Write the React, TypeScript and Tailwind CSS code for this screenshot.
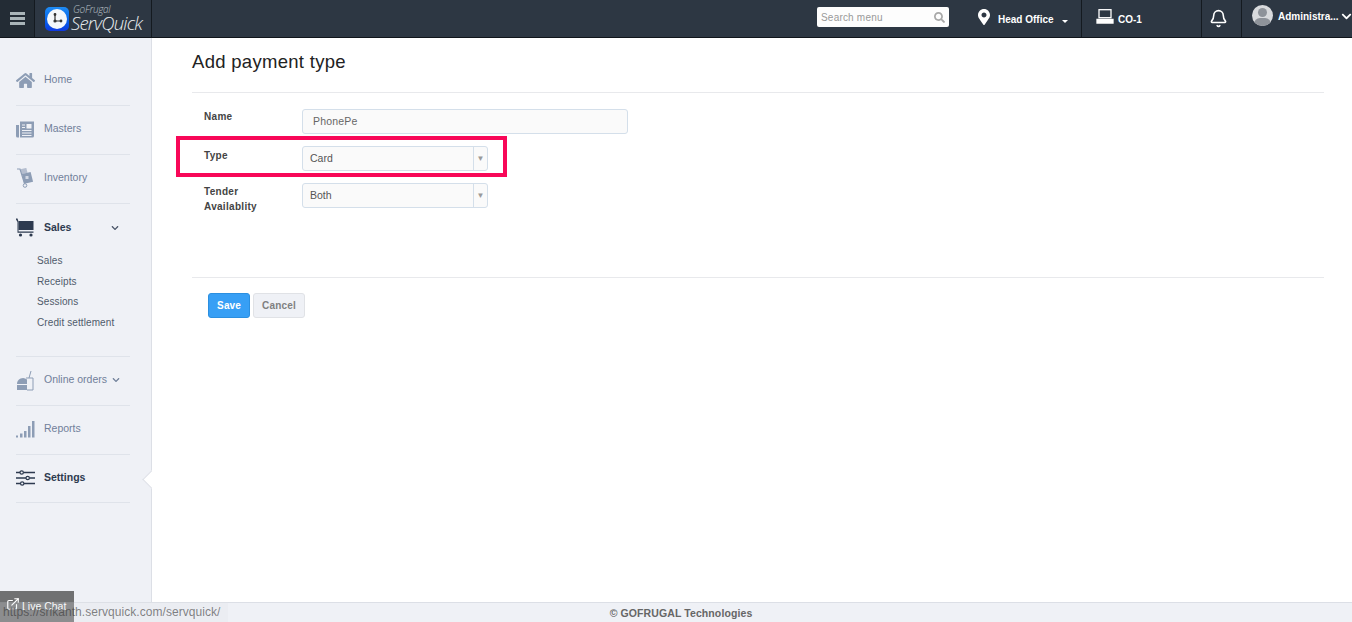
import type { ReactNode } from 'react'
import { Bell } from 'lucide-react'
import { FaChevronDown, FaHome, FaMapMarkerAlt, FaSearch } from 'react-icons/fa'
import { FiExternalLink } from 'react-icons/fi'

const muted = '#8d9db5'

const NewsIcon = () => (
	<svg width="18" height="17" viewBox="0 0 18 17" fill={muted}>
		<path d="M0 4h3v12.500H1.500A1.500 1.500 0 0 1 0 15z" />
		<path d="M4 0.500h14V15a1.500 1.500 0 0 1-1.500 1.500H4z" />
		<rect x="10.500" y="3" width="5" height="4.500" fill="#eff1f6" />
		<path d="M6 4h3M6 6.500h3M6 9.500h9.500M6 12h9.500M6 14.500h9.500" stroke="#eff1f6" />
	</svg>
)

const DollyIcon = () => (
	<svg width="18" height="20" viewBox="0 0 18 20" fill={muted}>
		<path d="M1 1h3l4.500 14.500" fill="none" stroke={muted} strokeWidth="1.200" />
		<rect x="7" y="5" width="9" height="10" transform="rotate(-14 11 10)" />
		<rect x="5" y="0.500" width="6" height="5" transform="rotate(-14 8 3)" opacity=".6" />
		<circle cx="9" cy="17.500" r="1.800" fill="none" stroke={muted} />
		<rect x="9.500" y="8" width="3" height="3" fill="#eff1f6" opacity=".7" />
	</svg>
)

const CartIcon = () => (
	<svg width="19" height="19" viewBox="0 0 19 19" fill="#2d3a4f">
		<path d="M0 0.500h1.500l1 3v10h15v1.200H1.500V4L0 1.500z" />
		<rect x="2.500" y="3" width="15" height="9" />
		<circle cx="4.500" cy="17" r="1.600" />
		<circle cx="15" cy="17" r="1.600" />
	</svg>
)

const OrdersIcon = () => (
	<svg width="19" height="21" viewBox="0 0 19 21" fill={muted}>
		<path d="M1 14a6 6 0 0 1 10-4.500V14z" />
		<rect x="1" y="15" width="10" height="5" />
		<path d="M10 8h7v12h-6" fill="none" stroke={muted} />
		<path d="M13 8l2-7" fill="none" stroke={muted} />
	</svg>
)

const ReportsIcon = () => (
	<svg width="19" height="17" viewBox="0 0 19 17" fill={muted}>
		<rect x="0" y="14.500" width="2" height="2" />
		<rect x="4" y="12.500" width="2.500" height="4" />
		<rect x="8" y="10" width="2.500" height="6.500" />
		<rect x="12" y="5" width="2.500" height="11.500" />
		<rect x="16" y="0" width="2.500" height="16.500" />
	</svg>
)

const SettingsIcon = () => (
	<svg width="19" height="16" viewBox="0 0 19 16" fill="none" stroke="#2d3a4f" strokeWidth="1.600">
		<path d="M0 2.500h4M7.500 2.500H19M0 8h10M13.500 8H19M0 13.500h4.500M8 13.500h11" />
		<circle cx="5.700" cy="2.500" r="1.700" strokeWidth="1.200" />
		<circle cx="11.700" cy="8" r="1.700" strokeWidth="1.200" />
		<circle cx="6.200" cy="13.500" r="1.700" strokeWidth="1.200" />
	</svg>
)

const ComputerIcon = () => (
	<svg width="18" height="15" viewBox="0 0 18 15" fill="none" stroke="#fff" strokeWidth="1.300">
		<rect x="3" y="0.700" width="12" height="8" />
		<path d="M1 10.500h16v3.500H1z" fill="#fff" />
	</svg>
)

const NavItem = ({ icon, label, active, children, chevron, last }: { icon: ReactNode; label: string; active?: boolean; children?: ReactNode; chevron?: boolean; last?: boolean }) => (
	<div className={`relative flex items-center border-b border-[#dfe3ea] pb-[2px] ${last ? 'h-[48px]' : 'h-[49px]'}`}>
		<div className="flex w-[28px] items-center justify-start">{icon}</div>
		<span className={active ? 'text-[10.5px] font-bold text-[#2d3a4f]' : 'text-[10.5px] text-[#71809a]'}>{label}</span>
		{chevron ? <FaChevronDown className="ml-[5px] text-[8px] text-[#71809a]" /> : null}
		{children}
	</div>
)

const Select = ({ value }: { value: string }) => (
	<div className="flex h-[25px] w-[186px] items-center rounded-[3px] border border-[#d4dfea] bg-[#fafafa]">
		<span className="flex-1 pl-[7px] text-[10.5px] text-[#555]">{value}</span>
		<span className="flex h-full w-[14px] items-center justify-center border-l border-[#d4dfea] text-[8px] text-[#999]">▼</span>
	</div>
)

const App = () => {
	return (
		<div className="flex h-[622px] w-full flex-col overflow-hidden bg-white font-['Liberation_Sans',sans-serif]">
			<header className="flex h-[38px] shrink-0 border-b border-[#10151b] bg-[#2d3743] text-white">
				<div className="flex w-[35px] items-center justify-center border-r border-[#141a20] bg-[#232c35]">
					<div className="flex w-[15px] flex-col gap-[2px]">
						<span className="h-[3px] bg-[#a9b4b8]" />
						<span className="h-[3px] bg-[#a9b4b8]" />
						<span className="h-[3px] bg-[#a9b4b8]" />
					</div>
				</div>
				<div className="flex w-[117px] items-center border-r border-[#141a20] pl-[10px]">
					<div className="flex h-[24px] w-[24px] shrink-0 items-center justify-center rounded-[5px] bg-linear-to-b from-[#1f8cf5] to-[#1038e0]">
						<div className="flex h-[20px] w-[20px] items-center justify-center rounded-full bg-[#f4f7fb]">
							<svg width="12" height="12" viewBox="0 0 12 12" fill="#333" stroke="#333" strokeWidth="1.200">
								<path d="M4 1v7h6" fill="none" />
								<circle cx="4" cy="1.500" r="0.800" />
								<circle cx="4" cy="8" r="1" />
								<circle cx="10" cy="8" r="0.800" />
							</svg>
						</div>
					</div>
					<div className="ml-[2px] flex flex-col font-['Open_Sans',sans-serif] italic leading-none text-[#e8ecef]">
						<span className="pl-[2px] text-[10px] font-light leading-[9px] tracking-[-0.3px] text-[#b8c0c6]">GoFrugal</span>
						<span className="whitespace-nowrap text-[18.500px] font-light leading-[18px] tracking-[-0.8px]">ServQuick</span>
					</div>
				</div>
				<div className="ml-auto flex items-start pr-[29px] pt-[7px]">
					<div className="flex h-[20px] w-[132px] items-center justify-between rounded-[2px] bg-[#fdfdfd] px-[4px]">
						<span className="text-[10px] tracking-[0.2px] text-[#999]">Search menu</span>
						<FaSearch className="text-[11px] text-[#a8a8a8]" />
					</div>
				</div>
				<div className="flex w-[104px] items-center border-r border-[#141a20]">
					<FaMapMarkerAlt className="ml-[-2px] mt-[-4px] text-[16px]" />
					<span className="ml-[6px] mt-[2px] text-[10px] font-bold">Head Office</span>
					<span className="ml-[8px] mt-[5px] h-0 w-0 border-x-[3px] border-t-[3px] border-x-transparent border-t-white" />
				</div>
				<div className="flex w-[120px] items-center border-r border-[#141a20] pl-[14px]">
					<div className="mt-[-4px]">
						<ComputerIcon />
					</div>
					<span className="ml-[4px] mt-[2px] text-[10px] font-bold">CO-1</span>
				</div>
				<div className="flex w-[40px] items-center border-r border-[#141a20] pl-[7px]">
					<Bell size={19} strokeWidth={2} />
				</div>
				<div className="flex w-[110px] items-center pl-[10px]">
					<div className="relative mt-[-6px] h-[21px] w-[21px] shrink-0 overflow-hidden rounded-full bg-[#d8dadd]">
						<span className="absolute left-[6px] top-[3px] h-[9px] w-[9px] rounded-full bg-[#8e939a]" />
						<span className="absolute left-[2px] top-[13px] h-[12px] w-[17px] rounded-full bg-[#8e939a]" />
					</div>
					<span className="ml-[5px] mt-[-4px] whitespace-nowrap text-[10px] font-bold">Administra...</span>
					<FaChevronDown className="ml-[2px] mt-[-5px] text-[11px]" />
				</div>
			</header>

			<div className="flex min-h-0 flex-1">
				<aside className="relative w-[152px] shrink-0 border-r border-[#dcdfe6] bg-[#eff1f6] pl-[16px] pr-[21px] pt-[19px]">
					<NavItem icon={<FaHome size={19} color={muted} />} label="Home" />
					<NavItem icon={<NewsIcon />} label="Masters" />
					<NavItem icon={<DollyIcon />} label="Inventory" />
					<div className="h-[153px] border-b border-[#dfe3ea]">
						<div className="flex h-[47px] items-center">
							<div className="w-[28px]">
								<CartIcon />
							</div>
							<span className="text-[10.5px] font-bold text-[#2d3a4f]">Sales</span>
							<FaChevronDown className="ml-[40px] text-[8px] text-[#4a5568]" />
						</div>
						<div className="flex flex-col pl-[21px] text-[10px] leading-[20.500px] tracking-[0.1px] text-[#4f5b6b]">
							<span>Sales</span>
							<span>Receipts</span>
							<span>Sessions</span>
							<span>Credit settlement</span>
						</div>
					</div>
					<NavItem icon={<OrdersIcon />} label="Online orders" chevron />
					<NavItem icon={<ReportsIcon />} label="Reports" />
					<NavItem icon={<SettingsIcon />} label="Settings" active last>
						<span className="absolute right-[-28px] top-[18px] h-[13px] w-[13px] rotate-45 border-b border-l border-[#dcdfe6] bg-white" />
					</NavItem>
				</aside>

				<main className="min-w-0 flex-1 pl-[40px] pr-[28px]">
					<div className="flex h-[55px] items-center border-b border-[#e8e9ec] pb-[7px]">
						<h1 className="text-[18.500px] font-normal tracking-[0.3px] text-[#222]">Add payment type</h1>
					</div>
					<div className="relative pl-[12px] pt-[16px]">
						<div className="flex h-[37px]">
							<label className="w-[98px] pt-[1px] text-[10px] font-bold leading-[13px] tracking-[0.3px] text-[#444]">Name</label>
							<div className="flex h-[25px] w-[326px] items-center rounded-[3px] border border-[#d4dfea] bg-[#fafafa] pl-[10px] text-[10.5px] tracking-[0.2px] text-[#666]">PhonePe</div>
						</div>
						<div className="flex h-[37px]">
							<label className="w-[98px] pt-[3px] text-[10px] font-bold leading-[13px] tracking-[0.3px] text-[#444]">Type</label>
							<Select value="Card" />
						</div>
						<div className="flex h-[94px]">
							<label className="w-[98px] pt-[1px] text-[10px] font-bold leading-[15px] tracking-[0.3px] text-[#444]">Tender<br />Availablity</label>
							<Select value="Both" />
						</div>
						<div className="absolute left-[-16px] top-[43px] h-[41px] w-[331px] border-4 border-[#f80758]" />
					</div>
					<div className="flex gap-[3px] border-t border-[#e8e9ec] pl-[16px] pt-[15px]">
						<button className="h-[25px] w-[42px] rounded-[3px] border border-[#2b8fe0] bg-[#379ff5] pb-[1px] text-[10px] font-bold tracking-[0.1px] text-white">Save</button>
						<button className="h-[25px] w-[52px] rounded-[3px] border border-[#e0e2e6] bg-[#eff1f6] pb-[1px] text-[10px] font-bold tracking-[0.2px] text-[#808080]">Cancel</button>
					</div>
				</main>
			</div>

			<footer className="flex h-[20px] shrink-0 items-center justify-center border-t border-[#dcdfe6] bg-[#eff1f6] pl-[10px] pt-[2px] text-[10.5px] font-bold tracking-[0.1px] text-[#666]">
				© GOFRUGAL Technologies
			</footer>

			<div className="absolute bottom-0 left-0 flex h-[31px] w-[74px] items-start bg-[#3a3a3a]/70 pl-[6px] pt-[6px] text-[10.5px] text-white">
				<FiExternalLink className="mr-[2px] text-[14px]" />
				<span className="mt-[2px]">Live Chat</span>
			</div>
			<div className="absolute bottom-0 left-0 flex h-[20px] w-[228px] items-center bg-[#dfe2e8]/25 pl-[3px] text-[12px] tracking-[0.05px] text-[#333]/60">
				https://srikanth.servquick.com/servquick/
			</div>
		</div>
	)
}

export default App
